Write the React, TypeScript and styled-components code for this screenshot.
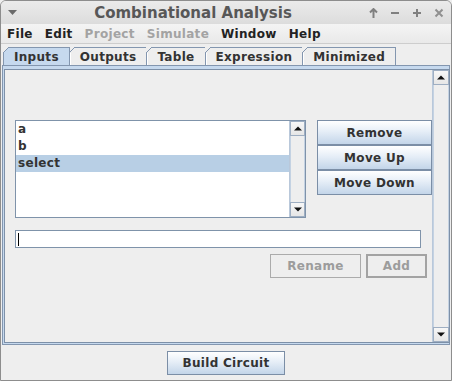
import { createGlobalStyle } from "styled-components";
import styled from "styled-components";

const GlobalStyle = createGlobalStyle`
  html, body {
    margin: 0;
    padding: 0;
    background: #eeeeee;
  }
  body {
    font-family: "DejaVu Sans", "Liberation Sans", sans-serif;
    font-weight: bold;
    font-size: 12px;
    letter-spacing: 0.3px;
    color: #333333;
  }
`;

const Window = styled.div`
  width: 452px;
  height: 381px;
  box-sizing: border-box;
  border: 1px solid #8d8d8d;
  border-radius: 6px 6px 0 0;
  background: #eeeeee;
  display: flex;
  flex-direction: column;
  overflow: hidden;
`;

const TitleBar = styled.div`
  height: 23px;
  flex: none;
  display: flex;
  align-items: center;
  background: linear-gradient(#ebebeb, #dcdcdc);
`;

const TitleMenuIcon = styled.div`
  width: 23px;
  display: flex;
  justify-content: center;
`;

const Title = styled.div`
  flex: 1;
  text-align: center;
  font-size: 15px;
  letter-spacing: 0;
  color: #575757;
`;

const Controls = styled.div`
  display: flex;
  margin-right: 1px;
`;

const Control = styled.div`
  width: 22px;
  height: 23px;
  display: flex;
  align-items: center;
  justify-content: center;
`;

const MenuBar = styled.div`
  height: 19px;
  flex: none;
  display: flex;
  align-items: center;
  background: linear-gradient(#f4f4f4, #e9e9e9);
  border-bottom: 1px solid #cdcdcd;
`;

const MenuItem = styled.span<{ $disabled?: boolean }>`
  padding: 0 6px;
  color: ${({ $disabled }) => ($disabled ? "#a3a3a3" : "#222222")};
`;

const TabRow = styled.div`
  flex: none;
  display: flex;
  padding: 3px 0 0 2px;
  height: 18px;
`;

const Tab = styled.div<{ $active?: boolean }>`
  position: relative;
  box-sizing: border-box;
  height: 18px;
  padding: 0 10px;
  margin-right: -1px;
  display: flex;
  align-items: center;
  border: 1px solid #8396af;
  border-bottom: none;
  background: ${({ $active }) => ($active ? "#c6d9ee" : "#eeeeee")};
  box-shadow: ${({ $active }) => ($active ? "none" : "inset 1px 0 0 #ffffff")};
  color: #333333;
  z-index: ${({ $active }) => ($active ? 2 : 1)};

  &::before {
    content: "";
    position: absolute;
    top: -1px;
    left: -1px;
    width: 6px;
    height: 6px;
    background: linear-gradient(
      135deg,
      #eeeeee 0 42%,
      #8396af 42% 58%,
      ${({ $active }) => ($active ? "#c6d9ee" : "#eeeeee")} 58%
    );
  }
`;

const TabBody = styled.div`
  flex: 1;
  margin: 0 1px;
  border: 1px solid #8396af;
  background: #c6d9ee;
  padding: 3px 1px 1px 1px;
  display: flex;
`;

const Panel = styled.div`
  flex: 1;
  border: 1px solid #7d90a8;
  background: #eeeeee;
  display: flex;
`;

const Content = styled.div`
  flex: 1;
  padding: 50px 0 0 10px;
  display: flex;
  flex-direction: column;
`;

const TopRow = styled.div`
  display: flex;
  gap: 11px;
`;

const ListBox = styled.div`
  width: 291px;
  height: 98px;
  box-sizing: border-box;
  border: 1px solid #7f93aa;
  background: #ffffff;
  display: flex;
`;

const ListItems = styled.div`
  flex: 1;
  display: flex;
  flex-direction: column;
`;

const ListItem = styled.div<{ $selected?: boolean }>`
  height: 17px;
  line-height: 17px;
  padding-left: 2px;
  color: #333333;
  background: ${({ $selected }) => ($selected ? "#b8cfe5" : "transparent")};
`;

const ScrollBar = styled.div<{ $width: number }>`
  width: ${({ $width }) => $width}px;
  flex: none;
  display: flex;
  flex-direction: column;
  background: #eeeeee;
  border-left: 1px solid #b9c8da;
`;

const ArrowButton = styled.div`
  height: 15px;
  flex: none;
  box-sizing: border-box;
  border: 1px solid #9eaec2;
  background: linear-gradient(#f7f7f7, #e6e6e6);
  display: flex;
  align-items: center;
  justify-content: center;
`;

const Track = styled.div`
  flex: 1;
  border: 1px solid #c4d2e2;
  border-top: none;
  border-bottom: none;
  background: #eeeeee;
`;

const ButtonColumn = styled.div`
  width: 115px;
  display: flex;
  flex-direction: column;
`;

const Button = styled.button<{ $w?: number; $h?: number }>`
  box-sizing: border-box;
  width: ${({ $w }) => ($w ? `${$w}px` : "100%")};
  height: ${({ $h }) => $h ?? 25}px;
  border: 1px solid #7b8ea6;
  background: linear-gradient(#ffffff 0%, #e6eef7 45%, #c3d5e9 100%);
  font-family: "DejaVu Sans", "Liberation Sans", sans-serif;
  font-weight: bold;
  font-size: 12px;
  letter-spacing: 0.3px;
  color: #333333;
  padding: 0;
  margin: 0;
  cursor: default;

  &:disabled {
    background: #eeeeee;
    color: #9c9c9c;
    border: 1px solid #ababab;
  }
`;

const DefaultDisabledButton = styled(Button)`
  &:disabled {
    border: 2px solid #a3a3a3;
  }
`;

const TextField = styled.div`
  width: 406px;
  height: 18px;
  box-sizing: border-box;
  margin-top: 12px;
  border: 1px solid #7f93aa;
  background: #ffffff;
  padding: 2px 0 0 2px;
`;

const Caret = styled.div`
  width: 1px;
  height: 13px;
  background: #000000;
`;

const ActionRow = styled.div`
  display: flex;
  justify-content: flex-end;
  gap: 5px;
  margin-top: 6px;
  padding-right: 5px;
`;

const Footer = styled.div`
  height: 35px;
  flex: none;
  display: flex;
  align-items: center;
  justify-content: center;
`;

const Up = () => (
  <svg width="8" height="5" viewBox="0 0 8 5">
    <path d="M0 4.5 L4 0.5 L8 4.5 Z" fill="#111" />
  </svg>
);

const Down = () => (
  <svg width="8" height="5" viewBox="0 0 8 5">
    <path d="M0 0.5 L8 0.5 L4 4.5 Z" fill="#111" />
  </svg>
);

const tabs = ["Inputs", "Outputs", "Table", "Expression", "Minimized"];
const inputs = ["a", "b", "select"];

export default function App() {
  return (
    <>
      <GlobalStyle />
      <Window>
        <TitleBar>
          <TitleMenuIcon>
            <svg width="9" height="5" viewBox="0 0 9 5">
              <path d="M0 0 L9 0 L4.5 5 Z" fill="#6a6a6a" />
            </svg>
          </TitleMenuIcon>
          <Title>Combinational Analysis</Title>
          <Controls>
            <Control>
              <svg width="9" height="10" viewBox="0 0 9 10">
                <path d="M4.5 1 V10 M1 4.5 L4.5 1 L8 4.5" stroke="#808080" strokeWidth="2" fill="none" />
              </svg>
            </Control>
            <Control>
              <svg width="10" height="10" viewBox="0 0 10 10">
                <path d="M1 5 H9" stroke="#808080" strokeWidth="2" />
              </svg>
            </Control>
            <Control>
              <svg width="10" height="10" viewBox="0 0 10 10">
                <path d="M1 5 H9 M5 1 V9" stroke="#808080" strokeWidth="2" />
              </svg>
            </Control>
            <Control>
              <svg width="10" height="10" viewBox="0 0 10 10">
                <path d="M1.5 1.5 L8.5 8.5 M8.5 1.5 L1.5 8.5" stroke="#909090" strokeWidth="2" />
              </svg>
            </Control>
          </Controls>
        </TitleBar>
        <MenuBar>
          <MenuItem>File</MenuItem>
          <MenuItem>Edit</MenuItem>
          <MenuItem $disabled>Project</MenuItem>
          <MenuItem $disabled>Simulate</MenuItem>
          <MenuItem>Window</MenuItem>
          <MenuItem>Help</MenuItem>
        </MenuBar>
        <TabRow>
          {tabs.map((t, i) => (
            <Tab key={t} $active={i === 0}>
              {t}
            </Tab>
          ))}
        </TabRow>
        <TabBody>
          <Panel>
            <Content>
              <TopRow>
                <ListBox>
                  <ListItems>
                    {inputs.map((name) => (
                      <ListItem key={name} $selected={name === "select"}>
                        {name}
                      </ListItem>
                    ))}
                  </ListItems>
                  <ScrollBar $width={15}>
                    <ArrowButton>
                      <Up />
                    </ArrowButton>
                    <Track />
                    <ArrowButton>
                      <Down />
                    </ArrowButton>
                  </ScrollBar>
                </ListBox>
                <ButtonColumn>
                  <Button>Remove</Button>
                  <Button>Move Up</Button>
                  <Button>Move Down</Button>
                </ButtonColumn>
              </TopRow>
              <TextField>
                <Caret />
              </TextField>
              <ActionRow>
                <Button $w={91} $h={24} disabled>
                  Rename
                </Button>
                <DefaultDisabledButton $w={61} $h={24} disabled>
                  Add
                </DefaultDisabledButton>
              </ActionRow>
            </Content>
            <ScrollBar $width={16}>
              <ArrowButton>
                <Up />
              </ArrowButton>
              <Track />
              <ArrowButton>
                <Down />
              </ArrowButton>
            </ScrollBar>
          </Panel>
        </TabBody>
        <Footer>
          <Button $w={118} $h={24}>
            Build Circuit
          </Button>
        </Footer>
      </Window>
    </>
  );
}
